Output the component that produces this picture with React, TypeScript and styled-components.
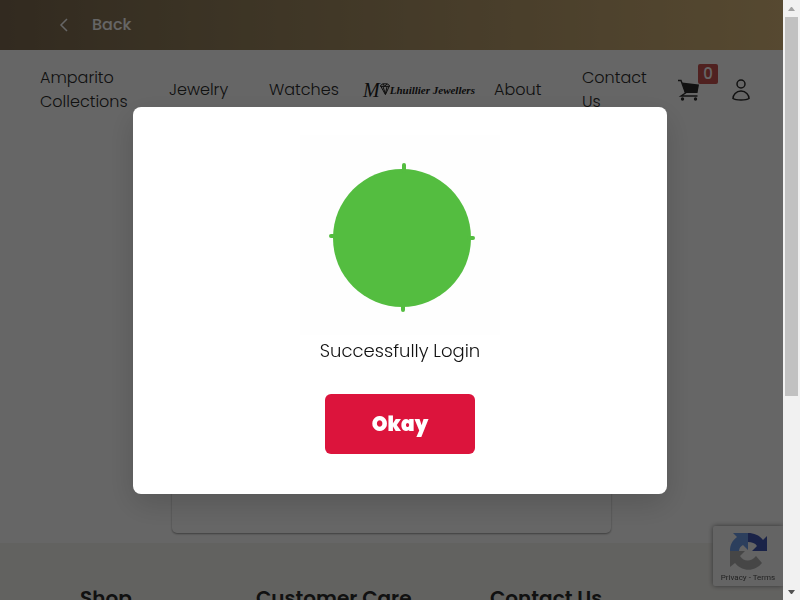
import React from "react";
import styled, { createGlobalStyle } from "styled-components";

const GlobalStyle = createGlobalStyle`
  * { box-sizing: border-box; }
  body { margin: 0; overflow: hidden; font-family: Poppins, Inter, "Noto Sans", sans-serif; color: #2b2b2b; background: #fff; }
  button { font: inherit; color: inherit; border: 0; padding: 0; background: none; cursor: pointer; }
  a { color: inherit; text-decoration: none; }
`;

const Shell = styled.div`
  display: grid;
  grid-template-columns: minmax(0, 1fr) 17px;
  height: 100vh;
`;
const Page = styled.div`
  display: flex;
  flex-direction: column;
  min-height: 0;
  overflow: hidden;
`;
const TopBar = styled.header`
  display: flex;
  align-items: center;
  flex: none;
  height: 50px;
  padding: 0 56px;
  background: linear-gradient(90deg, #7d6950, #8f7c59 20%, #d7b67a);
`;
const BackButton = styled.button`
  display: flex;
  align-items: center;
  gap: 20px;
  color: #fff;
  font-size: 16px;
  font-weight: 500;
  line-height: 24px;
`;
const Nav = styled.nav`
  display: flex;
  align-items: center;
  flex: none;
  height: 80px;
  padding: 0 33px 0 40px;
`;
const NavLink = styled.a<{ $width: number }>`
  flex: none;
  width: ${(p) => p.$width}px;
  padding-right: 30px;
  font-size: 16px;
  font-weight: 300;
  line-height: 24px;
`;
const Logo = styled.a`
  display: flex;
  align-items: center;
  flex: none;
  width: 131px;
  color: #222;
  font-family: "Liberation Serif", serif;
  font-style: italic;
  font-weight: 700;
  font-size: 11px;
  line-height: 30px;
  white-space: nowrap;
`;
const LogoInitial = styled.span`
  font-size: 20px;
  font-weight: 400;
`;
const NavIcons = styled.div`
  display: flex;
  align-items: center;
  justify-content: space-between;
  flex: 1;
  max-width: 72px;
`;
const CartButton = styled.button`
  position: relative;
  display: flex;
`;
const CartCount = styled.span`
  position: absolute;
  left: 20px;
  top: -15px;
  width: 20px;
  height: 20px;
  border-radius: 2px;
  background: #c85450;
  color: #fff;
  font-size: 15px;
  font-weight: 500;
  line-height: 20px;
`;
const IconButton = styled.button`
  display: flex;
`;
const Main = styled.main`
  display: flex;
  justify-content: center;
  flex: none;
  height: 413px;
  padding: 20px 0 10px;
`;
const FormCard = styled.section`
  width: 56%;
  border-radius: 5px;
  box-shadow: 0 1px 2px rgba(0, 0, 0, 0.4);
`;
const Footer = styled.footer`
  display: grid;
  grid-template-columns: 176px 234px 1fr;
  flex: 1;
  padding: 40px 80px 0;
  background: #f6f5f0;
`;
const FooterTitle = styled.h2`
  margin: 0;
  font-size: 20px;
  font-weight: 600;
  line-height: 30px;
  white-space: nowrap;
`;
const Captcha = styled.aside`
  position: fixed;
  right: 17px;
  bottom: 14px;
  display: flex;
  flex-direction: column;
  align-items: center;
  width: 70px;
  height: 60px;
  padding-top: 5px;
  border-radius: 2px 0 0 2px;
  background: #f9f9f9;
  box-shadow: 0 0 5px gray;
`;
const CaptchaLinks = styled.div`
  font-family: Roboto, sans-serif;
  font-size: 8px;
  line-height: 14px;
  color: #555;
`;
const Backdrop = styled.div`
  position: fixed;
  inset: 0;
  display: flex;
  align-items: center;
  justify-content: center;
  background: rgba(0, 0, 0, 0.6);
`;
const Dialog = styled.section`
  display: flex;
  flex-direction: column;
  align-items: center;
  width: 66.75%;
  padding: 28px 20px 40px;
  border-radius: 8px;
  background: #fff;
  color: #111;
  box-shadow: 0 10px 30px rgba(0, 0, 0, 0.16);
`;
const Message = styled.p`
  margin: 0 0 28px;
  font-size: 18px;
  font-weight: 300;
  line-height: 31px;
`;
const OkayButton = styled.button`
  width: 150px;
  height: 60px;
  border-radius: 6px;
  background: #dc143c;
  color: #fff;
  font-size: 20px;
  font-weight: 900;
`;
const ScrollRail = styled.div`
  position: relative;
  z-index: 1;
  display: flex;
  flex-direction: column;
  background: #f1f1f1;
`;
const ScrollArrow = styled.button`
  display: flex;
  align-items: center;
  justify-content: center;
  height: 17px;
`;
const ScrollTrack = styled.div`
  flex: 1;
  padding: 0 2px;
`;
const ScrollThumb = styled.div`
  height: 67%;
  background: #c1c1c1;
`;

export default function App() {
  return (
    <>
      <GlobalStyle />
      <Shell>
        <Page>
          <TopBar>
            <BackButton>
              <svg width="16" height="16" viewBox="0 0 16 16" fill="none" stroke="currentColor" strokeWidth="1.5" aria-hidden="true">
                <path d="M11 2L5 8l6 6" />
              </svg>
              Back
            </BackButton>
          </TopBar>
          <Nav>
            <NavLink href="#collections" $width={129}>Amparito Collections</NavLink>
            <NavLink href="#jewelry" $width={100}>Jewelry</NavLink>
            <NavLink href="#watches" $width={94}>Watches</NavLink>
            <Logo href="#home">
              <LogoInitial>M</LogoInitial>
              <svg width="10" height="15" viewBox="0 0 11 18" fill="none" stroke="currentColor" strokeWidth="1.2" aria-hidden="true">
                <path d="M0 3L3 1h5l3 2-5 11zM0 4h11M3 1l2 3 3-3M3 4l3 9 2-9" />
              </svg>
              Lhuillier Jewellers
            </Logo>
            <NavLink href="#about" $width={88}>About</NavLink>
            <NavLink href="#contact" $width={96}>Contact Us</NavLink>
            <NavIcons>
              <CartButton aria-label="Cart">
                <svg width="22" height="22" viewBox="0 0 22 22" fill="none" stroke="currentColor" aria-hidden="true">
                  <path d="M4 3.500l17 2L19.500 14H7z" fill="currentColor" stroke="none" />
                  <path d="M0 1.500h3L7.500 14l-4.500 3h16.500" strokeWidth="1.400" />
                  <circle cx="4.500" cy="20" r="1.700" fill="currentColor" stroke="none" />
                  <circle cx="17.500" cy="20" r="1.700" fill="currentColor" stroke="none" />
                </svg>
                <CartCount>0</CartCount>
              </CartButton>
              <IconButton aria-label="Account">
                <svg width="18" height="22" viewBox="0 0 18 22" fill="none" stroke="currentColor" strokeWidth="1.500" aria-hidden="true">
                  <circle cx="9" cy="5" r="4" />
                  <path d="M9 12c-5 0-8 4-8 7.500 3 2 13 2 16 0 0-3.500-3-7.500-8-7.500z" />
                </svg>
              </IconButton>
            </NavIcons>
          </Nav>
          <Main><FormCard /></Main>
          <Footer>
            <FooterTitle>Shop</FooterTitle>
            <FooterTitle>Customer Care</FooterTitle>
            <FooterTitle>Contact Us</FooterTitle>
          </Footer>
          <Captcha>
            <svg width="40" height="40" viewBox="0 0 40 40" aria-hidden="true">
              <path d="M20 2c6 0 11 2 15 7l4-4v15H24l5-5c-2-3-5-4-9-4z" fill="#4257b5" />
              <path d="M20 2H5l4 4C4 10 2 14 2 20h9c0-3 2-5 4-6l5 5z" fill="#6f9de8" />
              <path d="M2 20h15l-5 5c4 6 11 6 16 0l6 7c-7 9-20 9-27 0l-5 4z" fill="#b0b0b0" />
            </svg>
            <CaptchaLinks><a href="#privacy">Privacy</a> - <a href="#terms">Terms</a></CaptchaLinks>
          </Captcha>
        </Page>
        <ScrollRail>
          <ScrollArrow aria-label="Scroll up">
            <svg width="7" height="4" viewBox="0 0 7 4" fill="#a3a3a3" aria-hidden="true"><path d="M0 4l3-4h1l3 4z" /></svg>
          </ScrollArrow>
          <ScrollTrack><ScrollThumb /></ScrollTrack>
          <ScrollArrow aria-label="Scroll down">
            <svg width="7" height="4" viewBox="0 0 7 4" fill="#505050" aria-hidden="true"><path d="M0 0l3 4h1l3-4z" /></svg>
          </ScrollArrow>
        </ScrollRail>
      </Shell>
      <Backdrop>
        <Dialog role="dialog" aria-modal="true" aria-labelledby="login-message">
          <svg width="200" height="200" viewBox="0 0 200 200" aria-hidden="true">
            <rect width="200" height="200" fill="#fefefe" />
            <circle cx="102" cy="103" r="69" fill="#54bd40" />
            <path d="M104 30v6M103 171v4M31 101h4M169 103h4" stroke="#54bd40" strokeWidth="4" strokeLinecap="round" />
          </svg>
          <Message id="login-message">Successfully Login</Message>
          <OkayButton>Okay</OkayButton>
        </Dialog>
      </Backdrop>
    </>
  );
}
